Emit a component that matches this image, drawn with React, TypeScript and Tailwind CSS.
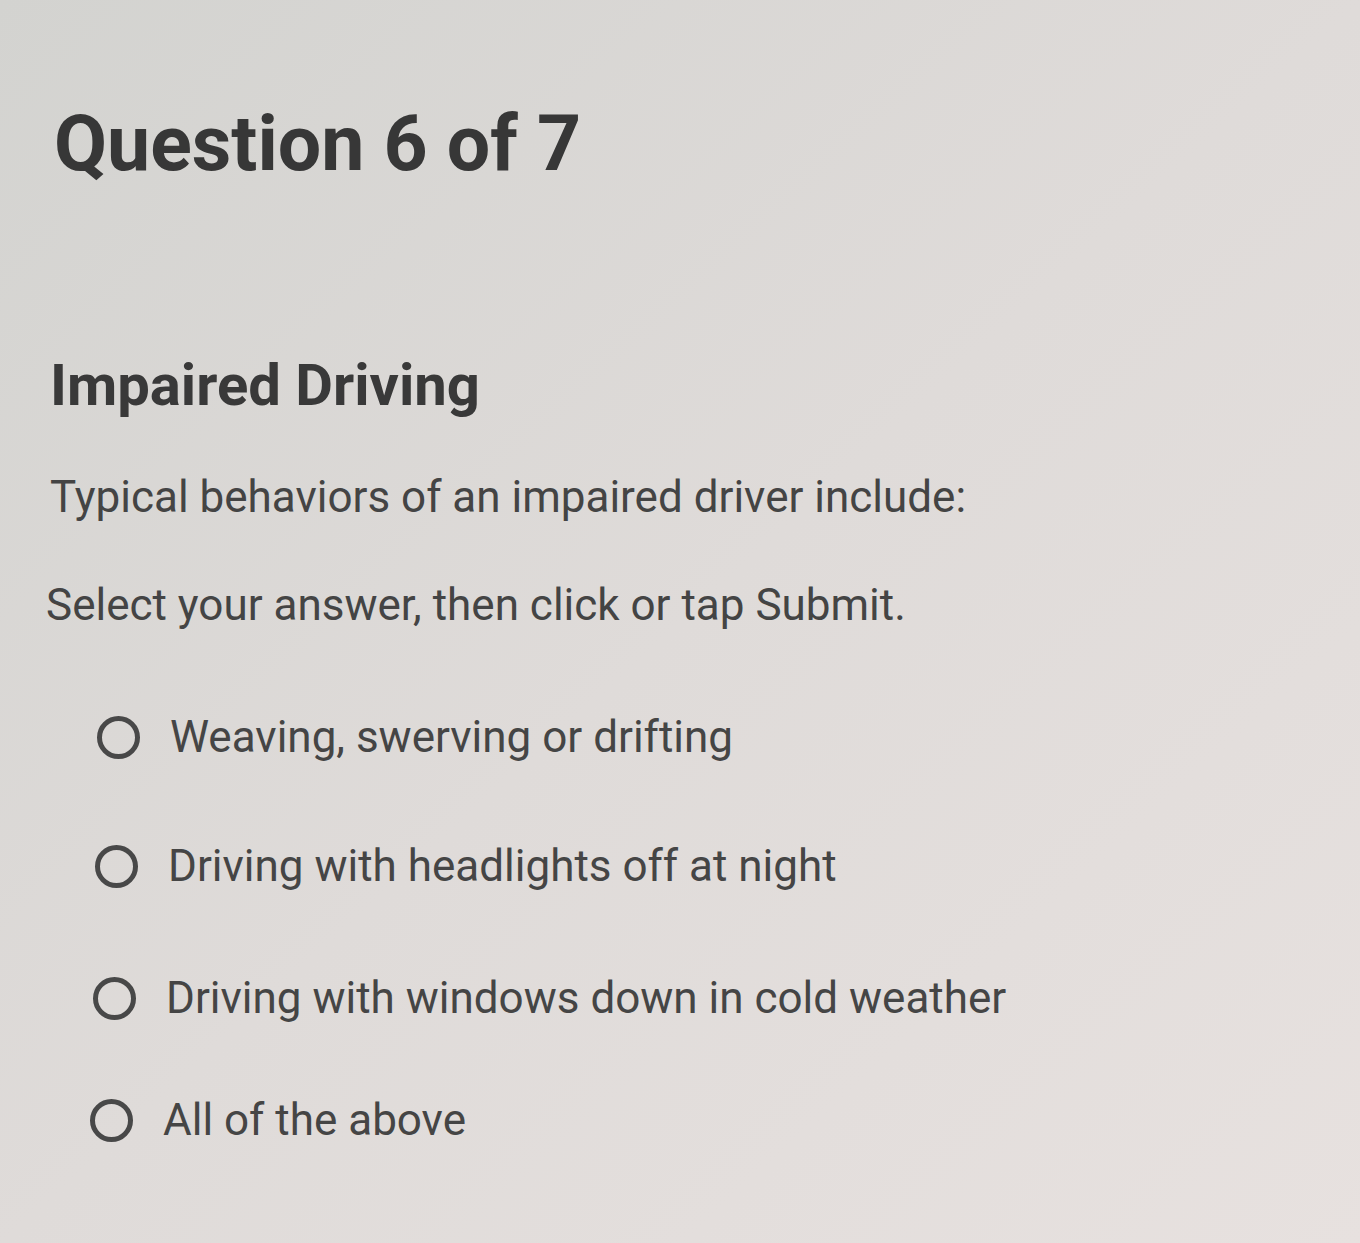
import React from "react"

const options = [
  { label: "Weaving, swerving or drifting", mt: "mt-0", ml: "ml-[97px]" },
  { label: "Driving with headlights off at night", mt: "mt-[85px]", ml: "ml-[95px]" },
  { label: "Driving with windows down in cold weather", mt: "mt-[88px]", ml: "ml-[93px]" },
  { label: "All of the above", mt: "mt-[78px]", ml: "ml-[90px]" },
]

export default function App() {
  return (
    <div
      className="w-[1360px] h-[1243px] overflow-hidden bg-gradient-to-br from-[#d3d3d0] via-[#dfdbd9] to-[#e7e1df] text-[#3f3f3f]"
      style={{ fontFamily: "Roboto, 'Liberation Sans', sans-serif" }}
    >
      <div className="pl-[54px] pt-[106px]">
        <h1 className="text-[77px] font-bold leading-none text-[#373737]">Question 6 of 7</h1>
      </div>

      <div className="pl-[50px] pt-[173px]">
        <h2 className="text-[58px] font-bold leading-none text-[#393939]">Impaired Driving</h2>
        <p className="mt-[61px] text-[44px] leading-none text-[#444]">Typical behaviors of an impaired driver include:</p>
        <p className="mt-[64px] ml-[-4px] text-[44px] leading-none text-[#444]">Select your answer, then click or tap Submit.</p>
      </div>

      <ul className="mt-[88px] flex flex-col">
        {options.map((o) => (
          <li key={o.label} className={`flex items-center gap-[30px] h-[44px] ${o.mt} ${o.ml}`}>
            <span className="w-[43px] h-[43px] rounded-full border-[5px] border-[#484848] shrink-0" />
            <span className="text-[44px] leading-none text-[#454545]">{o.label}</span>
          </li>
        ))}
      </ul>
    </div>
  )
}
